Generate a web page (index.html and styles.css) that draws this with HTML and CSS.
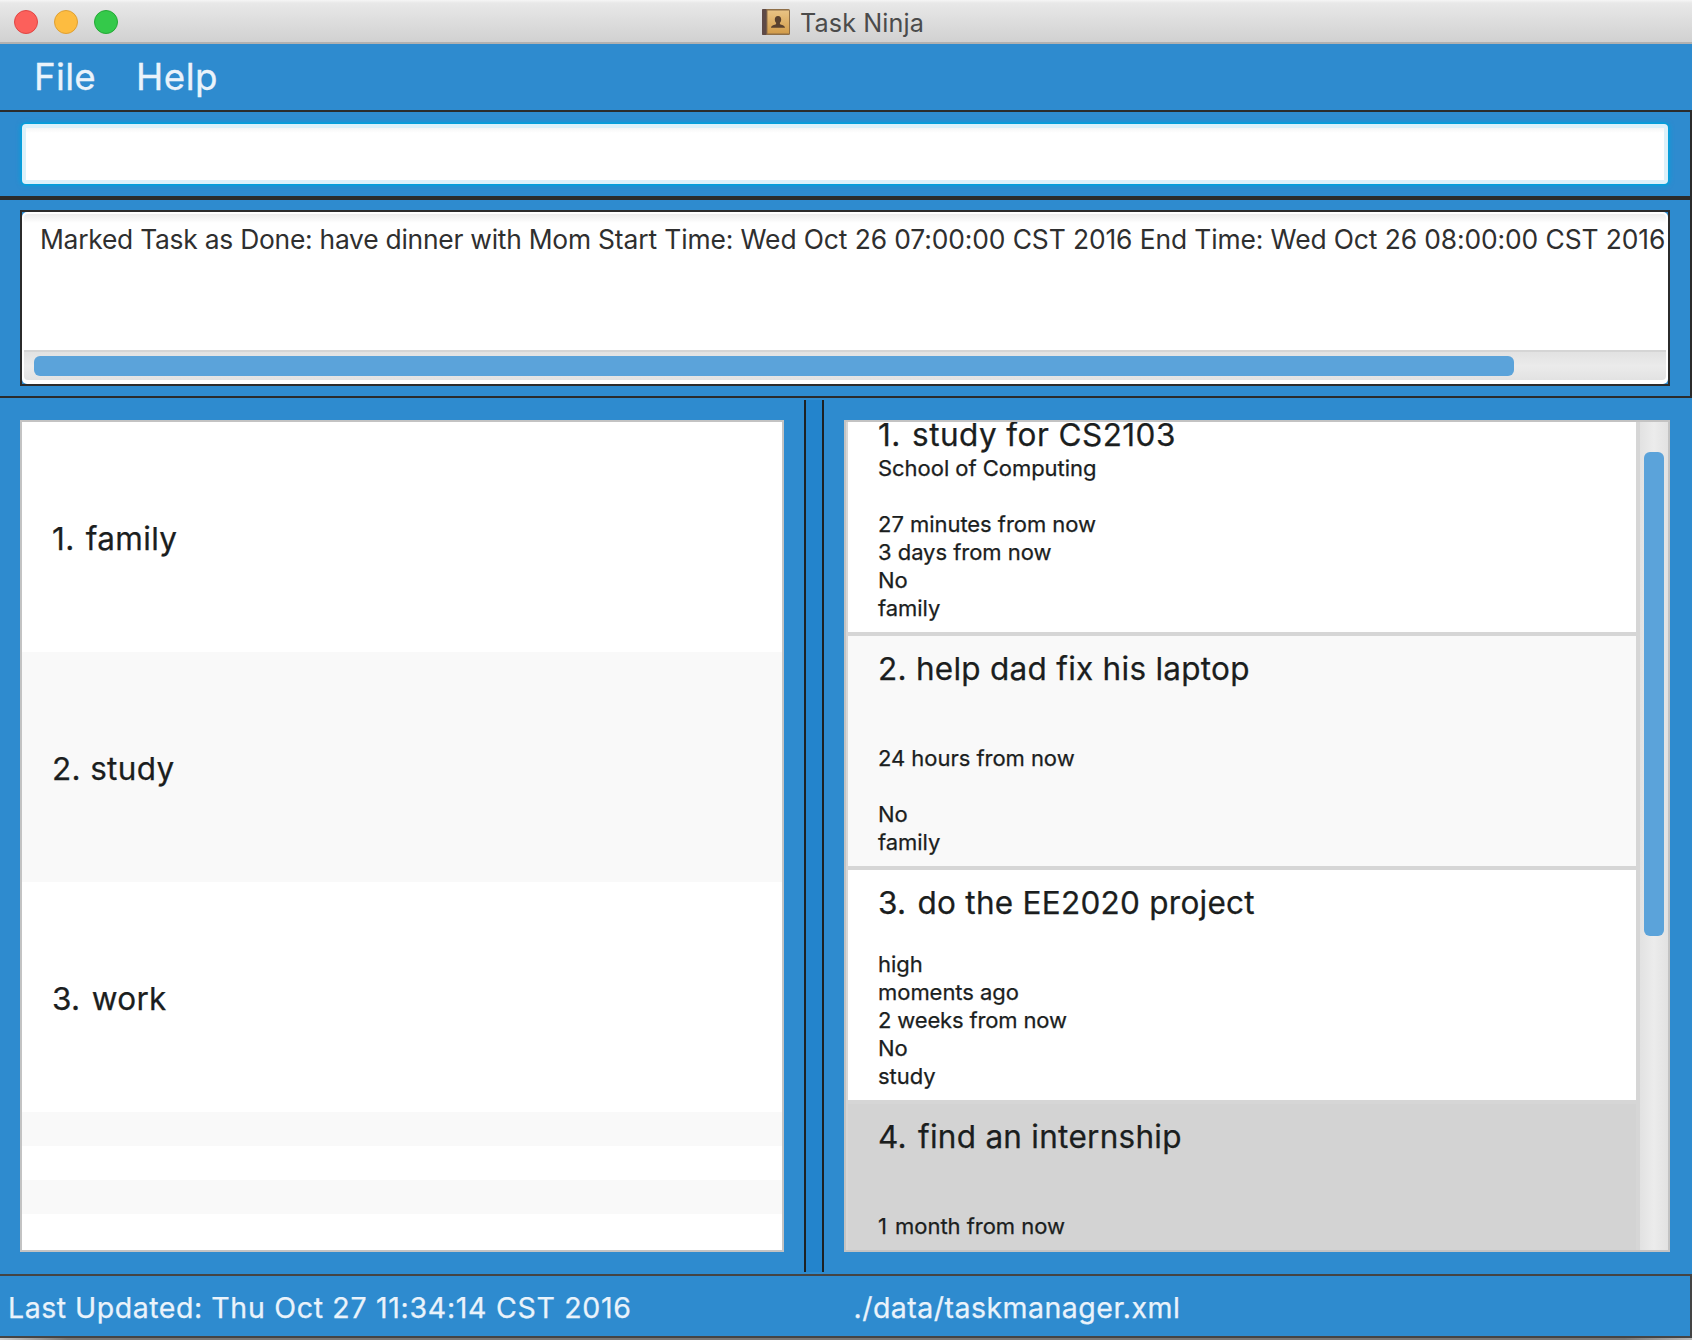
FILE: index.html
```html
<!DOCTYPE html>
<html lang="en">
<head>
<meta charset="utf-8">
<title>Task Ninja</title>
<link rel="stylesheet" href="styles.css">
</head>
<body>
<div class="window">
  <header class="titlebar">
    <div class="lights">
      <span class="light light-close"></span>
      <span class="light light-minimize"></span>
      <span class="light light-zoom"></span>
    </div>
    <div class="window-title">
      <svg class="book" width="30" height="28" viewBox="0 0 30 28" aria-hidden="true">
        <defs>
          <linearGradient id="cover" x1="0" y1="0" x2="0" y2="1">
            <stop offset="0" stop-color="#e9c384"/>
            <stop offset="1" stop-color="#d39d4b"/>
          </linearGradient>
        </defs>
        <rect x="1" y="1" width="28" height="26" rx="1.5" fill="#8f6f48"/>
        <rect x="1" y="1" width="4.5" height="26" rx="1" fill="#5e4a47"/>
        <rect x="6.5" y="2.5" width="21.5" height="23" fill="url(#cover)"/>
        <path d="M17 8c-2.200 0-3.200 1.600-3.200 3.500 0 1.600.6 2.500 1.300 3.300v1.200c-1.500 1.100-4.900 1.300-5.100 3.800h14c-.2-2.500-3.600-2.700-5.100-3.800v-1.200c.7-.8 1.300-1.700 1.300-3.300C20.200 9.600 19.200 8 17 8z" fill="#59412f"/>
      </svg>
      <span class="title-text">Task Ninja</span>
    </div>
  </header>

  <nav class="menubar">
    <span class="menu menu-file">File</span>
    <span class="menu menu-help">Help</span>
  </nav>

  <section class="command-pane">
    <input class="command" type="text" aria-label="Command">
  </section>

  <section class="result-pane">
    <div class="result">
      <div class="result-area">
        <div class="result-text"><span class="message">Marked Task as Done: have dinner with Mom </span>Start Time: Wed Oct 26 07:00:00 CST 2016 End Time: Wed Oct 26 08:00:00 CST 2016</div>
        <div class="hscroll"><div class="hthumb"></div></div>
      </div>
    </div>
  </section>

  <main class="split">
    <section class="tags">
      <div class="tag"><span class="num">1.</span> family</div>
      <div class="tag">2. study</div>
      <div class="tag"><span class="num">3.</span> work</div>
      <div class="filler"></div>
      <div class="filler"></div>
      <div class="filler"></div>
      <div class="filler"></div>
    </section>
    <div class="divider"></div>
    <section class="tasks">
      <div class="task-list">
        <article class="task task-first">
          <h2 class="name name-wide"><span class="num">1.</span> study for CS2103</h2>
          <p>School of Computing</p><p></p><p>27 minutes from now</p><p>3 days from now</p><p>No</p><p>family</p>
        </article>
        <article class="task">
          <h2 class="name">2. help dad fix his laptop</h2>
          <p></p><p></p><p>24 hours from now</p><p></p><p>No</p><p>family</p>
        </article>
        <article class="task">
          <h2 class="name"><span class="num">3.</span> do the EE2020 project</h2>
          <p></p><p>high</p><p>moments ago</p><p class="tight">2 weeks from now</p><p>No</p><p>study</p>
        </article>
        <article class="task task-selected">
          <h2 class="name"><span class="num">4.</span> find an internship</h2>
          <p></p><p></p><p><span class="num">1</span> month from now</p><p></p><p></p><p></p>
        </article>
      </div>
      <div class="vscroll"><div class="vthumb"></div></div>
    </section>
  </main>

  <footer class="status">
    <span class="updated"><span class="label">Last Updated: </span>Thu Oct 27 11:34:14 CST 2016</span>
    <span class="path">./data/taskmanager.xml</span>
  </footer>
  <div class="shadow"></div>
</div>
</body>
</html>
```
FILE: styles.css
```css
* { box-sizing: border-box; }

body {
  margin: 0;
  background: #2e8bcf;
  font-family: Inter, "Open Sans", sans-serif;
}

.window {
  display: flex;
  flex-direction: column;
  width: 1692px;
  height: 1340px;
  overflow: hidden;
  background: #2e8bcf;
}
.window > * { flex-shrink: 0; }

/* Title bar */
.titlebar {
  display: grid;
  grid-template-columns: 761px 1fr;
  align-items: center;
  height: 44px;
  background: linear-gradient(#f6f6f6 0, #e8e8e8 3px, #d1d1d1 42px);
  border-bottom: 2px solid #b1b1b1;
}
.lights { display: flex; gap: 16px; padding: 2px 0 0 14px; }
.light { width: 24px; height: 24px; border-radius: 50%; border: 1px solid; }
.light-close { background: #fc605b; border-color: #e04644; }
.light-minimize { background: #fdbc40; border-color: #dfa033; }
.light-zoom { background: #34c94a; border-color: #24a936; }
.window-title { display: flex; align-items: center; gap: 9px; padding-top: 2px; }
.book { display: block; }
.title-text { padding-top: 1px; font-size: 25.2px; line-height: 30px; letter-spacing: .1px; color: #4b4b4b; }

/* Menu */
.menubar {
  display: flex;
  height: 68px;
  padding-left: 34px;
  border-bottom: 2px solid #2b2b2b;
}
.menu { font-size: 36.7px; line-height: 65px; color: #eaf3fb; -webkit-text-stroke: .3px #eaf3fb; }
.menu-file { width: 102px; letter-spacing: .3px; }
.menu-help { letter-spacing: .5px; }

/* Command box */
.command-pane {
  height: 86px;
  padding: 12px 22px;
  border-right: 2px solid #2b2b2b;
  border-bottom: 2px solid #2b2b2b;
}
.command {
  display: block;
  width: 1646px;
  height: 60px;
  border: 4px solid #dcf1fa;
  border-radius: 4px;
  outline: none;
  background: linear-gradient(#f6f6f6, #fff 5px);
  background-clip: padding-box;
  box-shadow: 0 0 0 1.5px #049fdb, 0 0 4px 2px rgba(4, 159, 219, .7);
}

/* Result display */
.result-pane {
  height: 200px;
  padding: 10px 20px;
  border: 2px solid #2b2b2b;
  border-left: 0;
}
.result { width: 1650px; height: 176px; border: 2px solid #2b2b2b; }
.result-area {
  display: flex;
  flex-direction: column;
  height: 172px;
  padding: 2px 2px 4px;
  border-radius: 5px;
  background: #fff;
}
.result-text {
  flex: 1;
  padding-left: 16px;
  overflow: hidden;
  background: linear-gradient(#ececec, #fff 9px);
  border-radius: 4px 4px 0 0;
  font-size: 26.4px;
  line-height: 50px;
  letter-spacing: -.106px;
  white-space: nowrap;
  color: #2f2f2f;
}
.message { letter-spacing: -.243px; }
.hscroll {
  height: 30px;
  padding: 4px 10px;
  border-top: 2px solid #d5d5d5;
  border-radius: 0 0 4px 4px;
  background: linear-gradient(#e2e2e2, #ebebeb 50%, #e2e2e2);
}
.hthumb { width: 1480px; height: 20px; border-radius: 6px; background: #5ba3da; }

/* Lists */
.split {
  display: flex;
  height: 874px;
  padding: 2px 0 0 20px;
}
.tags {
  width: 764px;
  height: 832px;
  margin-top: 20px;
  border: 2px solid #c3c3c3;
  background: #fff;
}
.tag {
  height: 230px;
  padding-left: 30px;
  font-size: 31.5px;
  line-height: 233px;
  letter-spacing: .33px;
  color: #1b1e1e;
  -webkit-text-stroke: .25px #1b1e1e;
}
.num { margin-right: 2px; }
.tag:nth-child(even), .filler:nth-child(even) { background: #f9f9f9; }
.filler { height: 34px; }
.divider {
  width: 20px;
  height: 872px;
  margin: 0 20px;
  border: solid #1d2123;
  border-width: 0 2px;
  background: #2384cc;
}
.tasks {
  display: flex;
  width: 826px;
  height: 832px;
  margin-top: 20px;
  overflow: hidden;
  border: 2px solid #c3c3c3;
  background: #d6d6d6;
}
.task-list { width: 794px; height: 828px; overflow: hidden; }
.task {
  height: 234px;
  padding: 14px 0 12px 30px;
  border: solid #d6d6d6;
  border-width: 2px 4px 2px 2px;
  background: #fff;
  color: #1b1e1e;
  -webkit-text-stroke: .25px #1b1e1e;
}
.task-first { margin-top: -22px; }
.task:nth-child(even) { background: #f9f9f9; }
.task.task-selected { background: #d3d3d3; }
.name {
  height: 38px;
  margin: 0;
  font-size: 31.5px;
  font-weight: 400;
  line-height: 38px;
  letter-spacing: .265px;
}
.name-wide { letter-spacing: .45px; }
.task p { height: 28px; margin: 0; font-size: 22px; line-height: 28px; letter-spacing: -.04px; }
.task p.tight { letter-spacing: -.15px; }
.vscroll {
  width: 28px;
  padding: 30px 4px 0;
  background: linear-gradient(90deg, #e2e2e2, #ececec 50%, #e2e2e2);
}
.vthumb { width: 20px; height: 484px; border-radius: 6px; background: #5ba3da; }

/* Status bar */
.status {
  display: grid;
  grid-template-columns: 845.5px 1fr;
  height: 64px;
  margin-top: 2px;
  padding-left: 8px;
  border: 2px solid #444;
  border-left: 0;
  font-size: 28.5px;
  line-height: 63px;
  letter-spacing: .481px;
  color: #eaf3fb;
  -webkit-text-stroke: .25px #eaf3fb;
}
.updated { letter-spacing: .7px; white-space: pre; }
.label { letter-spacing: .52px; }
.shadow { height: 2px; background: linear-gradient(90deg, #ccc, #777 4%, #777 96%, #bbb); }
```
